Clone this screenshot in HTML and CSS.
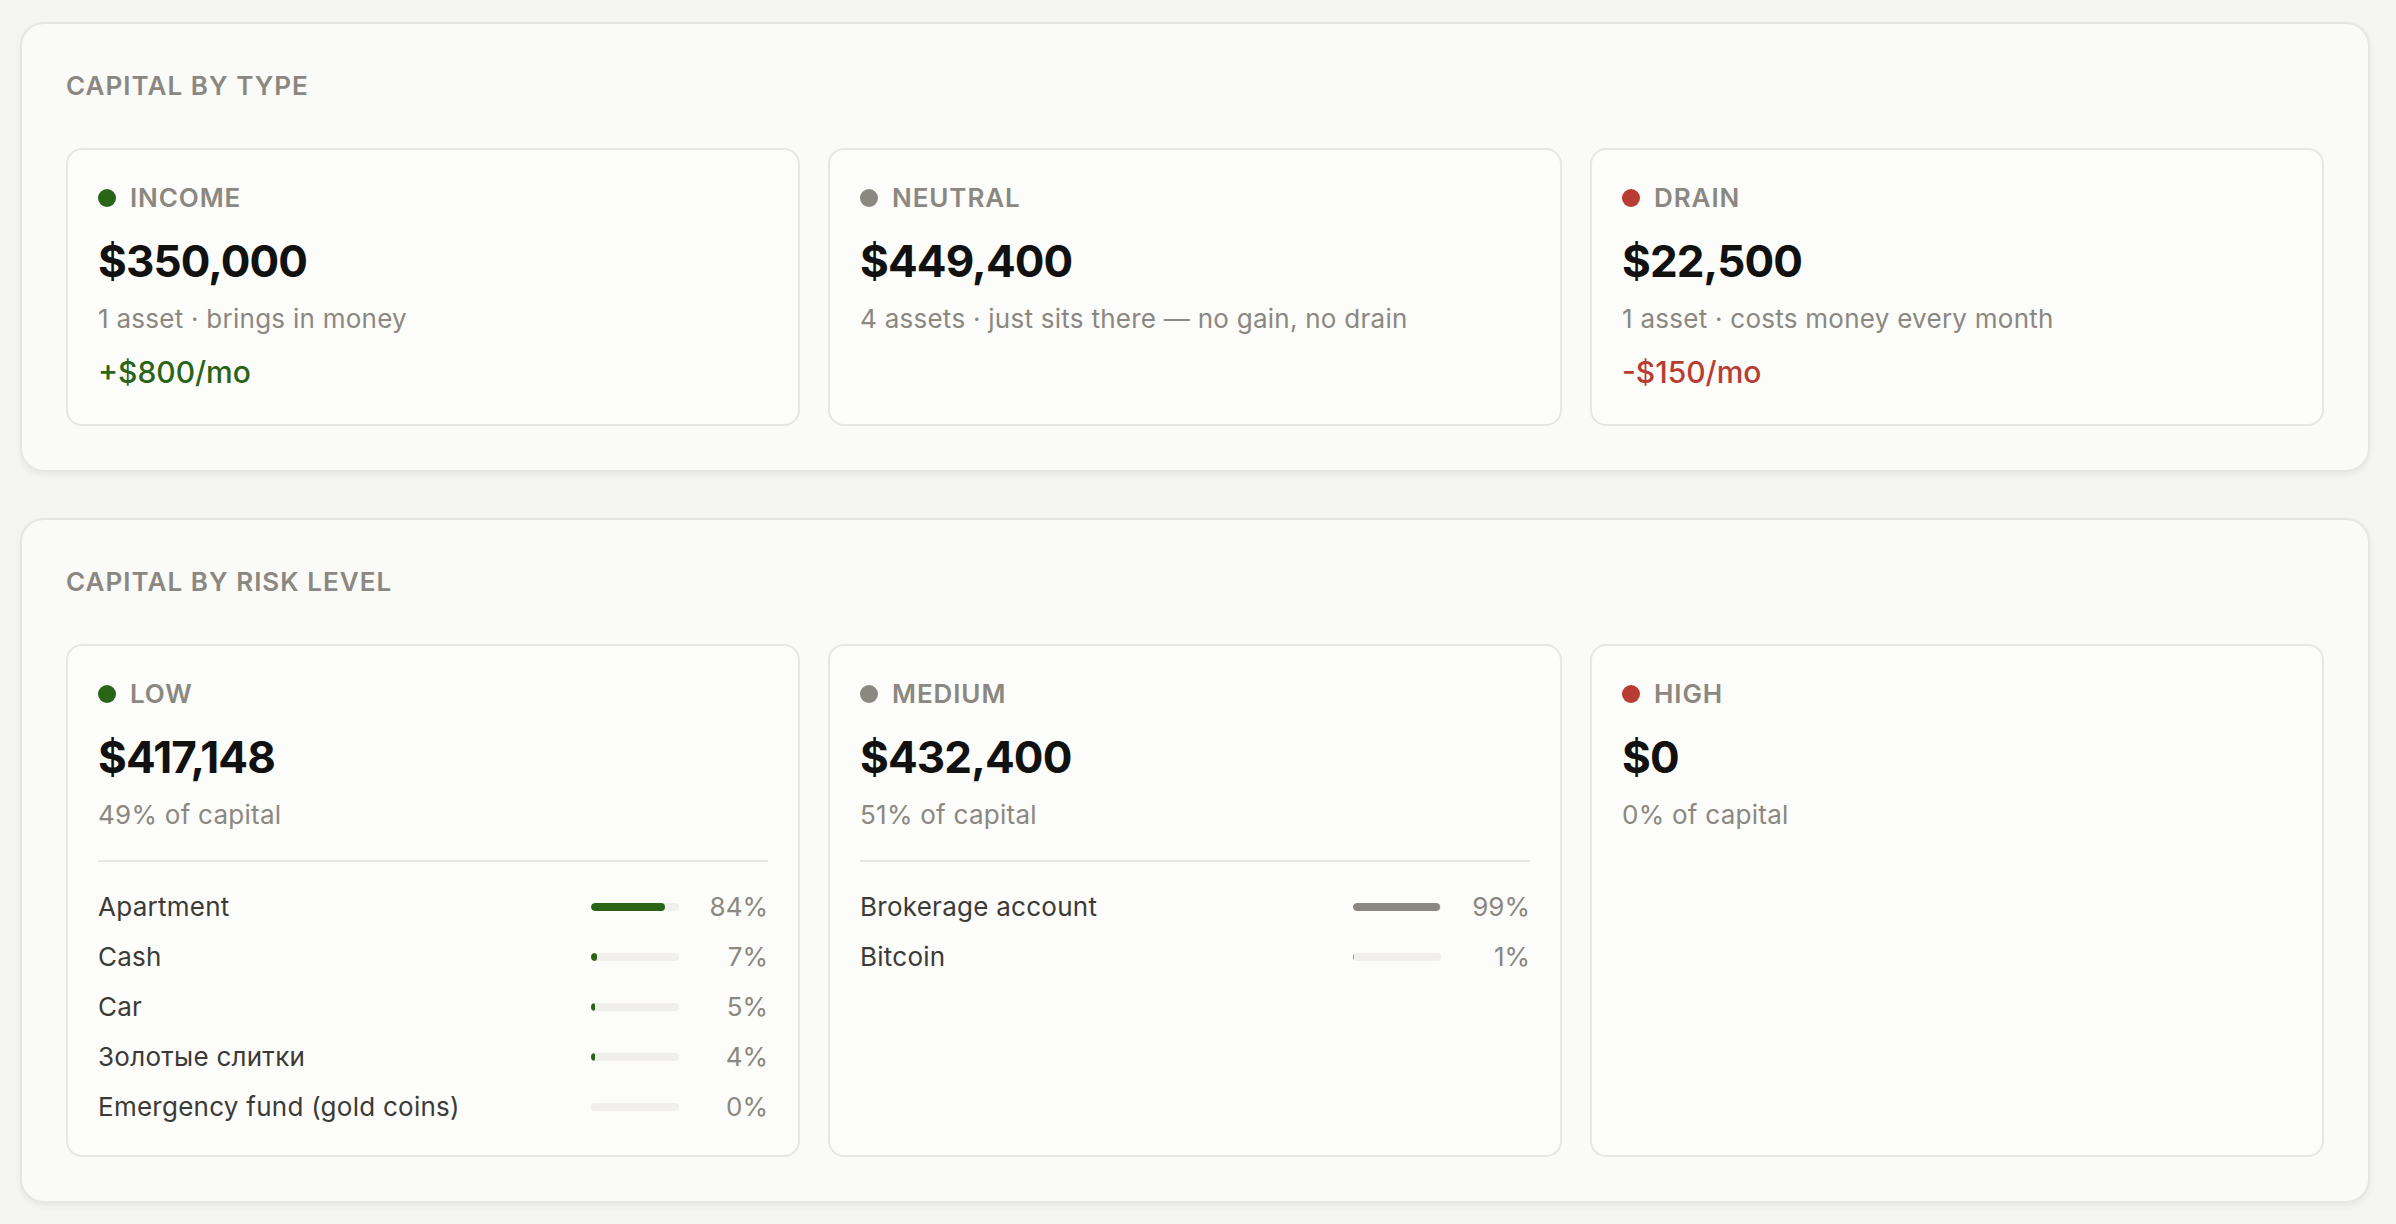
FILE: index.html
```html
<!DOCTYPE html>
<html lang="en">
<head>
  <meta charset="UTF-8">
  <meta name="viewport" content="width=device-width, initial-scale=1.0">
  <title>Capital breakdown</title>
  <link rel="stylesheet" href="styles.css">
</head>
<body>
  <section class="panel">
    <h2 class="panel-title">Capital by type</h2>
    <div class="cards">
      <div class="card">
        <div class="card-label"><span class="dot green"></span>Income</div>
        <div class="card-amount">$350,000</div>
        <div class="card-sub">1 asset · brings in money</div>
        <div class="card-delta up">+$800/mo</div>
      </div>
      <div class="card">
        <div class="card-label"><span class="dot gray"></span>Neutral</div>
        <div class="card-amount">$449,400</div>
        <div class="card-sub">4 assets · just sits there — no gain, no drain</div>
      </div>
      <div class="card">
        <div class="card-label"><span class="dot red"></span>Drain</div>
        <div class="card-amount">$22,500</div>
        <div class="card-sub">1 asset · costs money every month</div>
        <div class="card-delta down">-$150/mo</div>
      </div>
    </div>
  </section>

  <section class="panel">
    <h2 class="panel-title">Capital by risk level</h2>
    <div class="cards">
      <div class="card">
        <div class="card-label"><span class="dot green"></span>Low</div>
        <div class="card-amount">$417,148</div>
        <div class="card-sub">49% of capital</div>
        <div class="asset-list">
          <div class="asset-row">
            <span class="asset-name">Apartment</span>
            <span class="bar"><span class="bar-fill green" style="width: 84%"></span></span>
            <span class="asset-pct">84%</span>
          </div>
          <div class="asset-row">
            <span class="asset-name">Cash</span>
            <span class="bar"><span class="bar-fill green" style="width: 7%"></span></span>
            <span class="asset-pct">7%</span>
          </div>
          <div class="asset-row">
            <span class="asset-name">Car</span>
            <span class="bar"><span class="bar-fill green" style="width: 5%"></span></span>
            <span class="asset-pct">5%</span>
          </div>
          <div class="asset-row">
            <span class="asset-name">Золотые слитки</span>
            <span class="bar"><span class="bar-fill green" style="width: 4%"></span></span>
            <span class="asset-pct">4%</span>
          </div>
          <div class="asset-row">
            <span class="asset-name">Emergency fund (gold coins)</span>
            <span class="bar"><span class="bar-fill green" style="width: 0%"></span></span>
            <span class="asset-pct">0%</span>
          </div>
        </div>
      </div>
      <div class="card">
        <div class="card-label"><span class="dot gray"></span>Medium</div>
        <div class="card-amount">$432,400</div>
        <div class="card-sub">51% of capital</div>
        <div class="asset-list">
          <div class="asset-row">
            <span class="asset-name">Brokerage account</span>
            <span class="bar"><span class="bar-fill gray" style="width: 99%"></span></span>
            <span class="asset-pct">99%</span>
          </div>
          <div class="asset-row">
            <span class="asset-name">Bitcoin</span>
            <span class="bar"><span class="bar-fill gray" style="width: 1%"></span></span>
            <span class="asset-pct">1%</span>
          </div>
        </div>
      </div>
      <div class="card">
        <div class="card-label"><span class="dot red"></span>High</div>
        <div class="card-amount">$0</div>
        <div class="card-sub">0% of capital</div>
      </div>
    </div>
  </section>
</body>
</html>
```

FILE: styles.css
```css
body {
  font-family: Inter, "Noto Sans", sans-serif;
  margin: 0;
  padding: 22px 26px 22px 20px;
  background-color: #f5f5f3;
  color: #111;
}

.panel {
  background: #fafaf8;
  border: 2px solid #e7e6e3;
  border-radius: 24px;
  padding: 44px;
  margin-bottom: 46px;
  box-shadow: 0 3px 6px rgba(0, 0, 0, 0.06);
}

.panel-title {
  margin: 0 0 44px;
  font-size: 26px;
  line-height: 36px;
  font-weight: 600;
  letter-spacing: 0.04em;
  text-transform: uppercase;
  color: #8a8880;
}

.cards {
  display: grid;
  grid-template-columns: repeat(3, 1fr);
  gap: 28px;
}

.card {
  background: #fcfcfa;
  border: 2px solid #e7e6e3;
  border-radius: 16px;
  padding: 30px;
}

.card-label {
  display: flex;
  align-items: center;
  gap: 14px;
  font-size: 26px;
  line-height: 36px;
  font-weight: 600;
  letter-spacing: 0.035em;
  text-transform: uppercase;
  color: #8a8880;
}

.dot {
  width: 18px;
  height: 18px;
  border-radius: 50%;
  flex-shrink: 0;
}

.dot.green { background: #2a6417; }
.dot.gray { background: #8a8880; }
.dot.red { background: #b83c32; }

.card-amount {
  margin-top: 18px;
  font-size: 44px;
  line-height: 54px;
  font-weight: 700;
  letter-spacing: -0.02em;
  color: #111;
}

.card-sub {
  margin-top: 13px;
  font-size: 26px;
  line-height: 36px;
  letter-spacing: 0.01em;
  color: #8a8880;
}

.card-delta {
  margin: 17px 0 4px;
  font-size: 30px;
  line-height: 36px;
  font-weight: 500;
}

.card-delta.up { color: #2a6417; }
.card-delta.down { color: #b83c32; }

.asset-list {
  margin-top: 27px;
  padding-top: 27px;
  border-top: 2px solid #e7e6e3;
  display: flex;
  flex-direction: column;
  gap: 14px;
}

.asset-row {
  display: flex;
  align-items: center;
  font-size: 26px;
  line-height: 36px;
  letter-spacing: 0.01em;
  color: #3b3a37;
}

.asset-name {
  flex: 1;
}

.bar {
  width: 88px;
  height: 8px;
  border-radius: 4px;
  background: #f0efec;
  overflow: hidden;
}

.bar-fill {
  display: block;
  height: 100%;
  border-radius: 4px;
}

.bar-fill.green { background: #2a6417; }
.bar-fill.gray { background: #8a8880; }

.asset-pct {
  width: 70px;
  margin-left: 19px;
  text-align: right;
  letter-spacing: 0;
  color: #8a8880;
}
```
